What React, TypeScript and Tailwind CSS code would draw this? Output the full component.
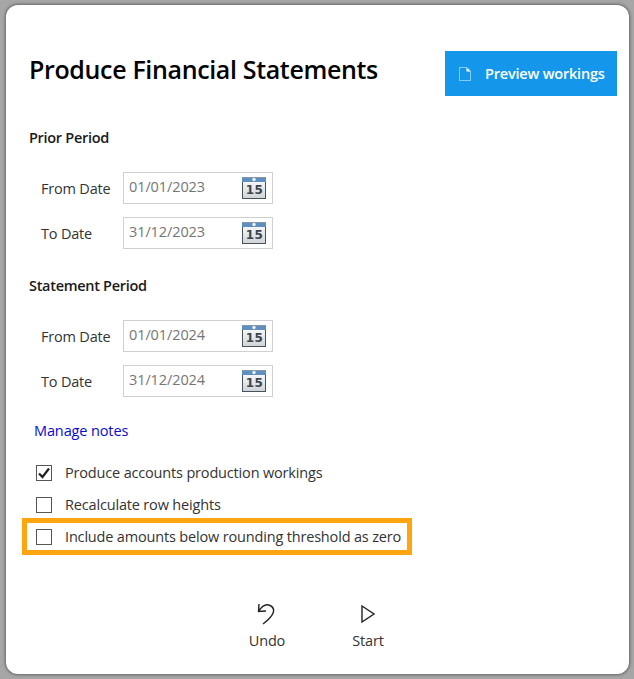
import React from "react";

function CalendarIcon() {
  return (
    <svg width="24" height="22" viewBox="0 0 24 22" className="block -mt-[1px]">
      <defs>
        <linearGradient id="calBody" x1="0" y1="0" x2="0" y2="1">
          <stop offset="0" stopColor="#ffffff" />
          <stop offset="1" stopColor="#d0d3d6" />
        </linearGradient>
      </defs>
      <rect x="0.5" y="0.5" width="23" height="21" fill="url(#calBody)" stroke="#46525e" />
      <rect x="0" y="0" width="24" height="5" fill="#5f8fbf" />
      <rect x="0" y="0" width="24" height="1" fill="#8496a8" />
      <circle cx="12" cy="2.5" r="1.7" fill="#eef4fa" />
      <text x="12.5" y="17" textAnchor="middle" fontSize="12" fontWeight="700" fontFamily="'DejaVu Sans', sans-serif" fill="#3c4650" letterSpacing="0.4">15</text>
    </svg>
  );
}

function DateRow({ label, value }: { label: string; value: string }) {
  return (
    <div className="flex items-center h-[32px]">
      <span className="w-[94px] pl-[12px] text-[14.5px] text-[#333] pt-[2px]">{label}</span>
      <div className="flex items-center justify-between w-[150px] h-[32px] border border-[#d0d0d0] pl-[5px] pr-[6px]">
        <span className="text-[14.5px] text-[#767676] -mt-[2px] tracking-[-0.1px]">{value}</span>
        <CalendarIcon />
      </div>
    </div>
  );
}

function Period({ title, from, to }: { title: string; from: string; to: string }) {
  return (
    <section>
      <h2 className="text-[14.5px] font-semibold text-[#1a1a1a] leading-[20px] tracking-[-0.3px]">{title}</h2>
      <div className="flex flex-col gap-[13px] mt-[24px]">
        <DateRow label="From Date" value={from} />
        <DateRow label="To Date" value={to} />
      </div>
    </section>
  );
}

function Check({ label, checked }: { label: string; checked?: boolean }) {
  return (
    <div className="flex items-center gap-[13px] h-[20px]">
      <span className="flex items-center justify-center w-[16px] h-[16px] border border-[#555] bg-white">
        {checked && (
          <svg width="14" height="14" viewBox="0 0 14 14">
            <path d="M2 7.5 L5.5 11 L12 2.5" fill="none" stroke="#222" strokeWidth="2.2" />
          </svg>
        )}
      </span>
      <span className="text-[14.5px] text-[#333] whitespace-nowrap tracking-[-0.17px]">{label}</span>
    </div>
  );
}

export default function App() {
  return (
    <div className="w-[634px] h-[679px] bg-[#a6a6a6] pt-[5px] pl-[6px] pr-[5px] pb-[5px] font-['Open_Sans','Noto_Sans',sans-serif] tracking-[-0.2px]">
      <div className="flex flex-col h-full bg-white rounded-[12px] pl-[23px] pr-[12px] shadow-[0_0_3px_1px_#666666]">
        <header className="flex items-start justify-between pt-[46px]">
          <h1 className="text-[25px] font-semibold text-black leading-[36px] tracking-[-0.35px]">Produce Financial Statements</h1>
          <button className="flex items-center w-[172px] h-[45px] bg-[#1497ea] text-white text-[14.5px] font-semibold pl-[14px]">
            <svg width="12" height="14" viewBox="0 0 12 14" className="mr-[14px]">
              <path d="M0.5 0.5 H8 L11.5 4 V13.5 H0.5 Z" fill="none" stroke="#fff" strokeWidth="1" strokeDasharray="1 1" />
              <path d="M7.5 0.5 L11.5 4.5 H7.5 Z" fill="#fff" />
            </svg>
            Preview workings
          </button>
        </header>
        <div className="mt-[32px] flex flex-col gap-[27px]">
          <Period title="Prior Period" from="01/01/2023" to="31/12/2023" />
          <Period title="Statement Period" from="01/01/2024" to="31/12/2024" />
        </div>
        <a className="mt-[23px] ml-[5px] text-[14.5px] text-[#0a0ad0] tracking-[-0.12px]">Manage notes</a>
        <div className="flex flex-col gap-[12px] mt-[21px] ml-[7px]">
          <Check label="Produce accounts production workings" checked />
          <Check label="Recalculate row heights" />
          <div className="relative">
            <Check label="Include amounts below rounding threshold as zero" />
            <div className="absolute -left-[14px] -top-[9px] w-[390px] h-[37px] border-[5px] border-[#ffa50f]" />
          </div>
        </div>
        <div className="flex justify-center gap-[61px] mt-[57px] mr-[11px]">
          <div className="flex flex-col items-center w-[40px]">
            <svg width="20" height="22" viewBox="0 0 20 22" className="-mt-[1px]">
              <path d="M2 1 L1.5 8.5 L9 8 M1.5 8.5 C5 3 9 0.5 13 2.5 C19 5.5 18 12 6 21" fill="none" stroke="#222" strokeWidth="1.4" />
            </svg>
            <span className="text-[14.5px] text-[#333] mt-[5px]">Undo</span>
          </div>
          <div className="flex flex-col items-center w-[40px]">
            <svg width="16" height="20" viewBox="0 0 16 20">
              <path d="M2 2 L14 10 L2 18 Z" fill="none" stroke="#222" strokeWidth="1.4" />
            </svg>
            <span className="text-[14.5px] text-[#333] mt-[6px]">Start</span>
          </div>
        </div>
      </div>
    </div>
  );
}
